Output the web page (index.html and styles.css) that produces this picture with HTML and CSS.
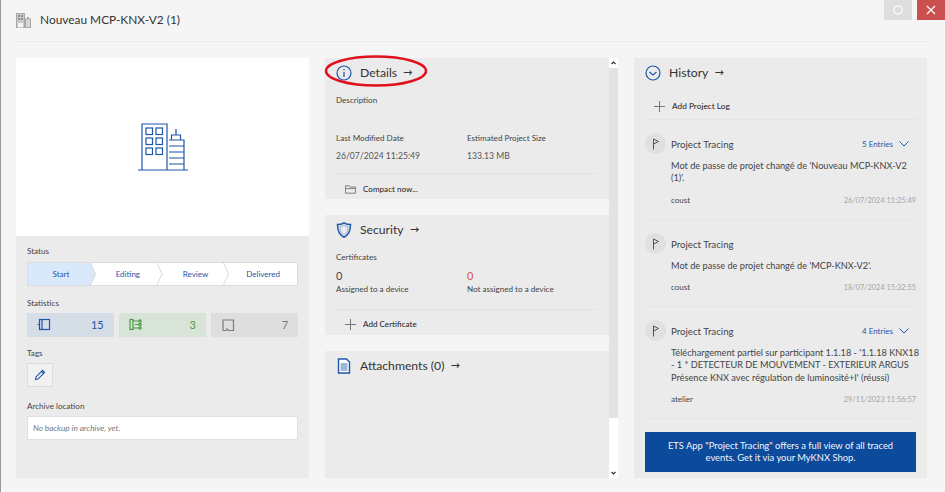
FILE: index.html
```html
<!DOCTYPE html>
<html lang="en">
<head>
<meta charset="utf-8">
<title>Nouveau MCP-KNX-V2 (1)</title>
<link rel="stylesheet" href="styles.css">
</head>
<body>
<div class="window">
  <header class="topbar">
    <svg class="project-icon" viewBox="0 0 15 15"><rect x="0.5" y="0.5" width="8" height="14" fill="#c9c9c9" stroke="#a8a8a8"/><rect x="2" y="2" width="2" height="2" fill="#8f8f8f"/><rect x="5" y="2" width="2" height="2" fill="#8f8f8f"/><rect x="2" y="5" width="2" height="2" fill="#8f8f8f"/><rect x="5" y="5" width="2" height="2" fill="#8f8f8f"/><rect x="2" y="10" width="5" height="4.5" fill="#f5f5f5"/><rect x="9.5" y="6" width="5" height="8.5" fill="#d8d8d8" stroke="#a8a8a8"/><path d="M11 4h2v2h-2z" fill="#a8a8a8"/></svg>
    <h1 class="title">Nouveau MCP-KNX-V2 (1)</h1>
    <div class="win-buttons">
      <button class="win-btn win-max"><svg viewBox="0 0 28 20" width="28" height="20"><circle cx="14" cy="10" r="4.2" fill="none" stroke="#fafafa" stroke-width="1.2"/></svg></button>
      <button class="win-btn win-close"><svg viewBox="0 0 28 20" width="28" height="20"><path d="M10 6l8 8M18 6l-8 8" stroke="#fff" stroke-width="1.3"/></svg></button>
    </div>
  </header>

  <main class="columns">
    <section class="col-left">
      <div class="hero">
        <svg class="hero-icon" viewBox="0 0 50 48" width="50" height="48" fill="none" stroke="#1f56a8" stroke-width="1.2">
          <path d="M0 47h50" />
          <path d="M4 47V1h25v46"/>
          <rect x="8" y="5" width="6.5" height="6.5"/><rect x="18" y="5" width="6.5" height="6.5"/>
          <rect x="8" y="15" width="6.5" height="6.5"/><rect x="18" y="15" width="6.5" height="6.5"/>
          <rect x="8" y="25" width="6.5" height="6.5"/><rect x="18" y="25" width="6.5" height="6.5"/>
          <path d="M31 17h15v30M31 23h15M31 29h15M31 35h15M31 41h15M33.500 17v-5h9v5M38 12V6"/>
        </svg>
      </div>
      <div class="left-body">
        <div class="label">Status</div>
        <div class="stepper">
          <svg class="stepper-bg" viewBox="0 0 271 22" preserveAspectRatio="none">
            <path d="M0 0H63L68 11L63 22H0z" fill="#d9e8fb"/>
            <path d="M63 0L68 11L63 22M130 0L135 11L130 22M197 0L202 11L197 22" fill="none" stroke="#d9d9d9"/>
          </svg>
          <span class="step step-active">Start</span>
          <span class="step">Editing</span>
          <span class="step">Review</span>
          <span class="step">Delivered</span>
        </div>
        <div class="label label-stats">Statistics</div>
        <div class="stats">
          <div class="stat stat-blue">
            <svg viewBox="0 0 14 14" width="14" height="14" fill="none" stroke="currentColor" stroke-width="1.2"><rect x="2.500" y="1.500" width="10" height="10"/><path d="M5 1.500v10M0.500 6.500h2"/></svg>
            <span class="stat-num">15</span>
          </div>
          <div class="stat stat-green">
            <svg viewBox="0 0 14 14" width="14" height="14" fill="none" stroke="currentColor" stroke-width="1.2"><rect x="1" y="1.500" width="3" height="10"/><path d="M4 3h6M4 10h6M6 6.500h4"/><circle cx="11" cy="3" r="1.200"/><circle cx="11" cy="10" r="1.200"/><circle cx="11" cy="6.500" r="1.200"/></svg>
            <span class="stat-num">3</span>
          </div>
          <div class="stat stat-gray">
            <svg viewBox="0 0 14 14" width="14" height="14" fill="none" stroke="currentColor" stroke-width="1.2"><path d="M2 2h10.500v10.500H7.500L6 11l-1 1.500H2z"/></svg>
            <span class="stat-num">7</span>
          </div>
        </div>
        <div class="label label-tags">Tags</div>
        <button class="tag-btn">
          <svg viewBox="0 0 12 12" width="12" height="12" fill="none" stroke="#1f56a8" stroke-width="1.100"><path d="M1.500 10.500l.7-2.800L8.500 1.400l2.100 2.100-6.300 6.300z"/><path d="M7.500 2.500l2 2"/></svg>
        </button>
        <div class="label label-archive">Archive location</div>
        <div class="archive-input">No backup in archive, yet.</div>
      </div>
    </section>

    <section class="col-mid">
      <div class="mid-cards">
        <article class="card card-details">
          <h2 class="card-head">
            <svg class="head-icon" viewBox="0 0 16 16" fill="none" stroke="#1f56a8" stroke-width="1.200"><circle cx="8" cy="8" r="7"/><path d="M8 7v5M8 4v1.500"/></svg>
            <span>Details</span><span class="arrow">→</span>
          </h2>
          <div class="label desc-label">Description</div>
          <div class="two-col meta-labels"><span class="label">Last Modified Date</span><span class="label">Estimated Project Size</span></div>
          <div class="two-col meta-values"><span>26/07/2024 11:25:49</span><span>133.13 MB</span></div>
          <div class="action-row action-compact">
            <svg viewBox="0 0 12 12" width="11" height="11" fill="none" stroke="#777" stroke-width="1"><path d="M.5 10V2h4l1 1.300h6V10zM.5 5h11"/></svg>
            <span>Compact now...</span>
          </div>
        </article>
        <article class="card card-security">
          <h2 class="card-head">
            <svg class="head-icon" viewBox="0 0 16 16" fill="none" stroke="#1f56a8"><path d="M8 .8c2 1.300 4 1.800 6.500 1.800 0 6-1.500 10.500-6.500 12.600C3 13.100 1.500 8.600 1.500 2.600 4 2.600 6 2.100 8 .8z" stroke-width="1.500"/><path d="M8 3.500c1.300.7 2.500 1 4 1.100-.1 4-1.200 6.800-4 8.200-2.800-1.400-3.900-4.200-4-8.200 1.500-.1 2.700-.4 4-1.100z" stroke="#8fb0dc" stroke-width="1"/></svg>
            <span>Security</span><span class="arrow">→</span>
          </h2>
          <div class="label cert-label">Certificates</div>
          <div class="two-col cert-nums"><span>0</span><span class="red">0</span></div>
          <div class="two-col cert-labels"><span class="label">Assigned to a device</span><span class="label">Not assigned to a device</span></div>
          <div class="action-row action-cert">
            <svg viewBox="0 0 11 11" width="11" height="11" stroke="#777" stroke-width="1"><path d="M5.500 0v11M0 5.500h11"/></svg>
            <span>Add Certificate</span>
          </div>
        </article>
        <article class="card card-attach">
          <h2 class="card-head">
            <svg class="head-icon" viewBox="0 0 16 16"><path d="M2.500 1h8l3 3v11h-11z" fill="#fff" stroke="#1f56a8" stroke-width="1.400"/><rect x="4.500" y="5" width="7" height="8" fill="#9db8dd"/></svg>
            <span>Attachments (0)</span><span class="arrow">→</span>
          </h2>
        </article>
      </div>
      <div class="scrollbar">
        <div class="scroll-up"><svg viewBox="0 0 9 10" width="9" height="10" fill="none" stroke="#333" stroke-width="1.200"><path d="M2.500 6l2-2 2 2"/></svg></div>
        <div class="scroll-track"></div>
        <div class="scroll-lower"><svg viewBox="0 0 9 10" width="9" height="10" fill="none" stroke="#333" stroke-width="1.200"><path d="M2.500 4l2 2 2-2"/></svg></div>
      </div>
    </section>

    <section class="col-right">
      <h2 class="card-head">
        <svg class="head-icon" viewBox="0 0 16 16" fill="none" stroke="#1f56a8" stroke-width="1.200"><circle cx="8" cy="8" r="7"/><path d="M4.500 7L8 10l3.500-3"/></svg>
        <span>History</span><span class="arrow">→</span>
      </h2>
      <div class="action-row action-log">
        <svg viewBox="0 0 11 11" width="11" height="11" stroke="#777" stroke-width="1"><path d="M5.500 0v11M0 5.500h11"/></svg>
        <span>Add Project Log</span>
      </div>
      <div class="entry entry-1">
        <div class="entry-head">
          <span class="flag"><svg viewBox="0 0 10 12" width="10" height="12" fill="none" stroke="#444" stroke-width=".9"><path d="M2.500 11.500V1l5 2.500-5 2.500"/></svg></span>
          <span class="entry-title">Project Tracing</span>
          <span class="entries">5 Entries<svg viewBox="0 0 10 6" width="10" height="6" fill="none" stroke="#1f56a8"><path d="M.5 .5l4.500 4.500 4.500-4.500"/></svg></span>
        </div>
        <p class="entry-text">Mot de passe de projet changé de 'Nouveau MCP-KNX-V2 (1)'.</p>
        <div class="entry-foot"><span>coust</span><span class="date">26/07/2024 11:25:49</span></div>
      </div>
      <div class="entry entry-2">
        <div class="entry-head">
          <span class="flag"><svg viewBox="0 0 10 12" width="10" height="12" fill="none" stroke="#444" stroke-width=".9"><path d="M2.500 11.500V1l5 2.500-5 2.500"/></svg></span>
          <span class="entry-title">Project Tracing</span>
        </div>
        <p class="entry-text">Mot de passe de projet changé de 'MCP-KNX-V2'.</p>
        <div class="entry-foot"><span>coust</span><span class="date">18/07/2024 15:32:55</span></div>
      </div>
      <div class="entry entry-3">
        <div class="entry-head">
          <span class="flag"><svg viewBox="0 0 10 12" width="10" height="12" fill="none" stroke="#444" stroke-width=".9"><path d="M2.500 11.500V1l5 2.500-5 2.500"/></svg></span>
          <span class="entry-title">Project Tracing</span>
          <span class="entries">4 Entries<svg viewBox="0 0 10 6" width="10" height="6" fill="none" stroke="#1f56a8"><path d="M.5 .5l4.500 4.500 4.500-4.500"/></svg></span>
        </div>
        <p class="entry-text entry-text-wide">Téléchargement partiel sur participant 1.1.18 - '1.1.18 KNX18 - 1 * DETECTEUR DE MOUVEMENT - EXTERIEUR ARGUS Présence KNX avec régulation de luminosité+I' (réussi)</p>
        <div class="entry-foot"><span>atelier</span><span class="date">29/11/2023 11:56:57</span></div>
      </div>
      <div class="banner">ETS App "Project Tracing" offers a full view of all traced events. Get it via your MyKNX Shop.</div>
    </section>
  </main>

  <svg class="highlight" viewBox="0 0 104 34" width="104" height="34"><ellipse cx="52" cy="17" rx="50" ry="14.500" fill="none" stroke="#e0101c" stroke-width="2.500"/></svg>
</div>
</body>
</html>
```

FILE: styles.css
```css
* { box-sizing: border-box; }
html, body { margin: 0; padding: 0; height: 100%; }
body {
  background: #f5f5f5;
  font-family: Lato, "Open Sans", "Liberation Sans", sans-serif;
  color: #333;
  font-size: 8.100px;
  overflow: hidden;
}
.window {
  position: relative;
  width: 945px;
  height: 492px;
  padding-left: 16px;
  border-left: 1px solid #9a9a9a;
  display: flex;
  flex-direction: column;
}
.topbar {
  height: 42px;
  margin-left: -1px;
  margin-right: 15px;
  display: flex;
  align-items: flex-start;
  border-bottom: 1px solid #ececec;
  padding-top: 13px;
  position: relative;
}
.project-icon { width: 15px; height: 15px; flex: none; }
.title {
  margin: -2px 0 0 9px;
  font-size: 11.900px;
  font-weight: 400;
  line-height: 18px;
  color: #333;
}
.win-buttons {
  position: absolute;
  top: 0;
  right: -15px;
  display: flex;
  gap: 5px;
}
.win-btn { width: 28px; height: 20px; padding: 0; border: 0; display: block; }
.win-btn svg { display: block; }
.win-max { background: #dedede; }
.win-close { background: #c9504f; }

.columns {
  display: flex;
  margin-left: -1px;
  margin-top: 16px;
  height: 420px;
}
.col-left { width: 293px; display: flex; flex-direction: column; background: #ebebeb; flex: none; }
.hero { height: 178px; background: #fff; display: flex; align-items: center; justify-content: center; padding: 0 0 1px 1px; }
.left-body { padding: 10px 11px 0; flex: 1; }
.label { font-size: 8.100px; line-height: 11px; color: #444; }
.stepper {
  position: relative;
  margin-top: 5px;
  height: 24px;
  background: #fff;
  border: 1px solid #dcdcdc;
  display: flex;
}
.stepper-bg { position: absolute; inset: 0; width: 100%; height: 100%; }
.step {
  position: relative;
  flex: 1;
  text-align: center;
  color: #1f56a8;
  font-size: 8px;
  line-height: 22px;
}
.step-active { flex: 0 0 66px; }
.label-stats { margin-top: 12px; }
.stats { display: flex; gap: 5.500px; margin-top: 4px; }
.stat {
  flex: 1;
  height: 24px;
  display: flex;
  align-items: center;
  justify-content: space-between;
  padding: 0 10px;
}
.stat-blue { background: #d5dde7; color: #1f56a8; }
.stat-green { background: #d9e4d9; color: #4b9a3f; }
.stat-gray { background: #dedede; color: #7a7a7a; }
.stat-num { font-size: 11px; line-height: 24px; }
.label-tags { margin-top: 11px; }
.tag-btn {
  display: flex;
  align-items: center;
  justify-content: center;
  width: 26px;
  height: 24px;
  margin-top: 4px;
  padding: 0;
  background: #f1f1f1;
  border: 1px solid #dcdcdc;
}
.label-archive { margin-top: 14px; }
.archive-input {
  margin-top: 4px;
  height: 24px;
  background: #fff;
  border: 1px solid #e0e0e0;
  padding-left: 5px;
  font-size: 8.200px;
  line-height: 22px;
  font-style: italic;
  color: #777;
}

.col-mid { width: 293px; margin-left: 16px; display: flex; flex: none; }
.mid-cards { width: 284px; display: flex; flex-direction: column; gap: 16px; }
.card { background: #ebebeb; padding: 0 11px; }
.card-details { height: 141px; }
.card-security { height: 120px; }
.card-attach { flex: 1; }
.card-head {
  display: flex;
  align-items: center;
  margin: 0;
  height: 30px;
  font-size: 12.200px;
  font-weight: 400;
  color: #333;
}
.card-head span { padding-bottom: 2px; }
.head-icon { width: 16px; height: 16px; margin-right: 8px; flex: none; }
.arrow { margin-left: 6px; font-family: "DejaVu Sans", sans-serif; font-size: 11px; }
.two-col { display: grid; grid-template-columns: 131px 1fr; }
.desc-label { margin-top: 7px; }
.meta-labels { margin-top: 27px; }
.meta-values { margin-top: 6px; font-size: 8.600px; line-height: 13px; color: #555; }
.action-row {
  display: flex;
  align-items: center;
  gap: 7px;
  font-size: 8.100px;
  color: #222;
  line-height: 11px;
  padding-left: 9px;
}
.action-compact { margin-top: 10px; border-top: 1px solid #e2e2e2; padding-top: 10px; }
.action-cert { margin-top: 14px; border-top: 1px solid #e2e2e2; padding-top: 9px; }
.cert-label { margin-top: 7px; }
.cert-nums { margin-top: 7px; font-size: 11px; line-height: 12px; color: #444; }
.cert-labels { margin-top: 2px; }
.red { color: #d9534f; }

.scrollbar { width: 9px; display: flex; flex-direction: column; background: #e3e3e3; }
.scroll-up { height: 10px; background: #fff; }
.scroll-track { flex: 1; }
.scroll-lower { height: 60px; background: #fff; display: flex; align-items: flex-end; }
.scrollbar svg { display: block; }

.col-right { width: 293px; margin-left: 16px; background: #ebebeb; padding: 0 11px; flex: none; display: flex; flex-direction: column; }
.action-log { margin-top: 11px; height: 21px; padding-bottom: 6px; border-bottom: 1px solid #e3e3e3; font-size: 8.300px; }
.entry { padding-top: 13px; border-bottom: 1px solid #e3e3e3; }
.entry-1 { height: 100px; }
.entry-2 { height: 87px; }
.entry-3 { height: 112px; }
.entry-head { display: flex; align-items: center; height: 21px; }
.flag {
  width: 21px;
  height: 21px;
  border-radius: 50%;
  background: #e0e0e0;
  display: flex;
  align-items: center;
  justify-content: center;
  flex: none;
}
.entry-title { margin-left: 5px; font-size: 9.700px; color: #444; }
.entries {
  margin-left: auto;
  margin-right: 7px;
  display: flex;
  align-items: center;
  gap: 6px;
  font-size: 8px;
  color: #1f56a8;
}
.entry-text {
  margin: 6px 0 0 26px;
  font-size: 9.200px;
  line-height: 12.300px;
  color: #444;
}
.entry-text-wide { margin-right: -4px; }
.entry-foot { display: flex; justify-content: space-between; margin: 10px 0 0 26px; font-size: 8px; line-height: 11px; color: #444; }
.date { color: #a5a5a5; font-size: 7.400px; }
.banner {
  margin-top: 13px;
  height: 40px;
  background: #0c4a9c;
  color: #f2f6fb;
  font-size: 9.400px;
  line-height: 12.300px;
  text-align: center;
  display: flex;
  align-items: center;
  padding: 0 16px;
}
.highlight { position: absolute; left: 323px; top: 54px; }
```
